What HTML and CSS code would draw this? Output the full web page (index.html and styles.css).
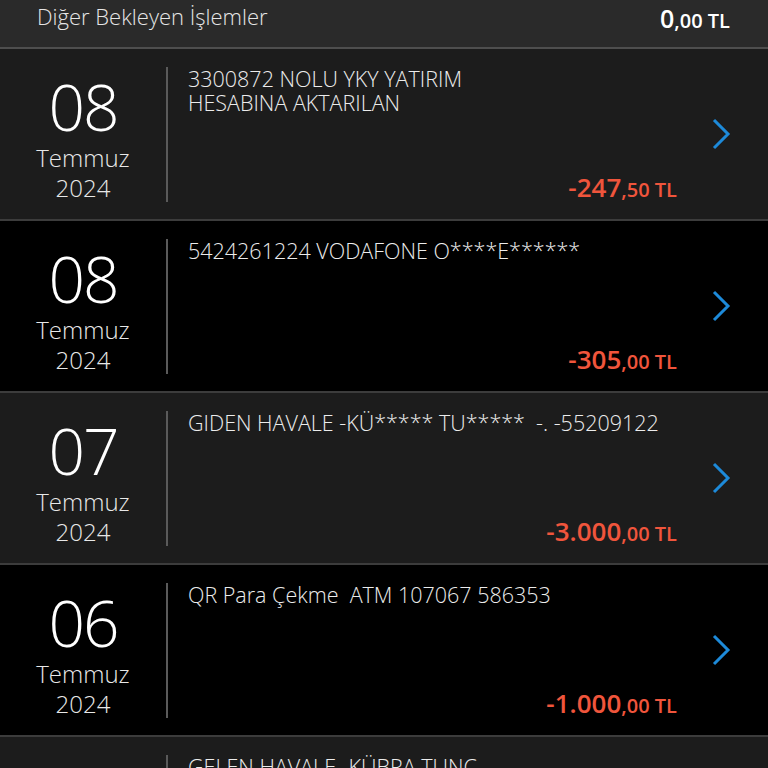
FILE: index.html
```html
<!DOCTYPE html>
<html lang="tr">
<head>
  <meta charset="UTF-8" />
  <meta name="viewport" content="width=device-width, initial-scale=1" />
  <title>Hesap Hareketleri</title>
  <link rel="stylesheet" href="styles.css">
</head>
<body>

  <div class="pending">
    <span class="pending-label">Diğer Bekleyen İşlemler</span>
    <span class="pending-amount">0<small>,00 TL</small></span>
  </div>

  <ul class="tx-list">
    <li class="tx">
      <div class="tx-date">
        <span class="day">08</span>
        <span class="month">Temmuz</span>
        <span class="year">2024</span>
      </div>
      <div class="tx-body">
        <p class="tx-desc">3300872 NOLU YKY YATIRIM<br>HESABINA AKTARILAN</p>
        <p class="tx-amount">-247<small>,50 TL</small></p>
      </div>
      <div class="tx-arrow">
        <svg width="20" height="32" viewBox="0 0 20 32"><path d="M3 2 L17 16 L3 30" fill="none" stroke="#1d8ad9" stroke-width="3"/></svg>
      </div>
    </li>
    <li class="tx">
      <div class="tx-date">
        <span class="day">08</span>
        <span class="month">Temmuz</span>
        <span class="year">2024</span>
      </div>
      <div class="tx-body">
        <p class="tx-desc">5424261224 VODAFONE O****E******</p>
        <p class="tx-amount">-305<small>,00 TL</small></p>
      </div>
      <div class="tx-arrow">
        <svg width="20" height="32" viewBox="0 0 20 32"><path d="M3 2 L17 16 L3 30" fill="none" stroke="#1d8ad9" stroke-width="3"/></svg>
      </div>
    </li>
    <li class="tx">
      <div class="tx-date">
        <span class="day">07</span>
        <span class="month">Temmuz</span>
        <span class="year">2024</span>
      </div>
      <div class="tx-body">
        <p class="tx-desc">GIDEN HAVALE -KÜ***** TU*****&nbsp; -. -55209122</p>
        <p class="tx-amount">-3.000<small>,00 TL</small></p>
      </div>
      <div class="tx-arrow">
        <svg width="20" height="32" viewBox="0 0 20 32"><path d="M3 2 L17 16 L3 30" fill="none" stroke="#1d8ad9" stroke-width="3"/></svg>
      </div>
    </li>
    <li class="tx">
      <div class="tx-date">
        <span class="day">06</span>
        <span class="month">Temmuz</span>
        <span class="year">2024</span>
      </div>
      <div class="tx-body">
        <p class="tx-desc">QR Para Çekme&nbsp; ATM 107067 586353</p>
        <p class="tx-amount">-1.000<small>,00 TL</small></p>
      </div>
      <div class="tx-arrow">
        <svg width="20" height="32" viewBox="0 0 20 32"><path d="M3 2 L17 16 L3 30" fill="none" stroke="#1d8ad9" stroke-width="3"/></svg>
      </div>
    </li>
    <li class="tx">
      <div class="tx-date">
        <span class="day">05</span>
        <span class="month">Temmuz</span>
        <span class="year">2024</span>
      </div>
      <div class="tx-body">
        <p class="tx-desc">GELEN HAVALE- KÜBRA TUNÇ</p>
        <p class="tx-amount">1.000<small>,00 TL</small></p>
      </div>
      <div class="tx-arrow">
        <svg width="20" height="32" viewBox="0 0 20 32"><path d="M3 2 L17 16 L3 30" fill="none" stroke="#1d8ad9" stroke-width="3"/></svg>
      </div>
    </li>
  </ul>

</body>
</html>
```

FILE: styles.css
```css
/* Reset */
* {
  box-sizing: border-box;
  margin: 0;
  padding: 0;
}
body {
  background-color: #000;
  color: #f2f2f2;
  font-family: 'Open Sans', 'Noto Sans', sans-serif;
  height: 100vh;
  overflow: hidden;
}
ul {
  list-style: none;
}

/* Pending header */
.pending {
  height: 49px;
  padding: 1px 38px 0 37px;
  background-color: #2a2a2a;
  border-bottom: 2px solid #4e4e4e;
  display: flex;
  justify-content: space-between;
  align-items: flex-start;
}
.pending-label {
  font-size: 22px;
  font-weight: 300;
  color: #e6e6e6;
}
.pending-amount {
  font-size: 25px;
  font-weight: 600;
  color: #fff;
}
.pending-amount small {
  font-size: 20px;
}

/* Transactions */
.tx {
  display: flex;
  height: 172px;
  background-color: #1c1c1c;
  border-bottom: 2px solid #3c3c3c;
}
.tx:nth-child(even) {
  background-color: #000;
}
.tx-date {
  width: 166px;
  padding-top: 21px;
  display: flex;
  flex-direction: column;
  align-items: center;
  font-weight: 300;
  color: #fff;
}
.day {
  font-size: 64px;
  line-height: 73px;
  letter-spacing: -2px;
}
.month,
.year {
  font-size: 24px;
  line-height: 30px;
  color: #e8e8e8;
}
.tx-body {
  flex: 1;
  margin: 18px 0 17px;
  padding-left: 20px;
  border-left: 2px solid #5a5a5a;
  display: flex;
  flex-direction: column;
  justify-content: space-between;
}
.tx-desc {
  font-size: 21.5px;
  line-height: 24px;
  font-weight: 300;
  color: #ececec;
}
.tx-amount {
  align-self: flex-end;
  font-size: 26px;
  line-height: 25px;
  font-weight: 600;
  color: #f0553c;
}
.tx-amount small {
  font-size: 20px;
}
.tx-arrow {
  width: 91px;
  padding-left: 34px;
  display: flex;
  align-items: center;
}
```
